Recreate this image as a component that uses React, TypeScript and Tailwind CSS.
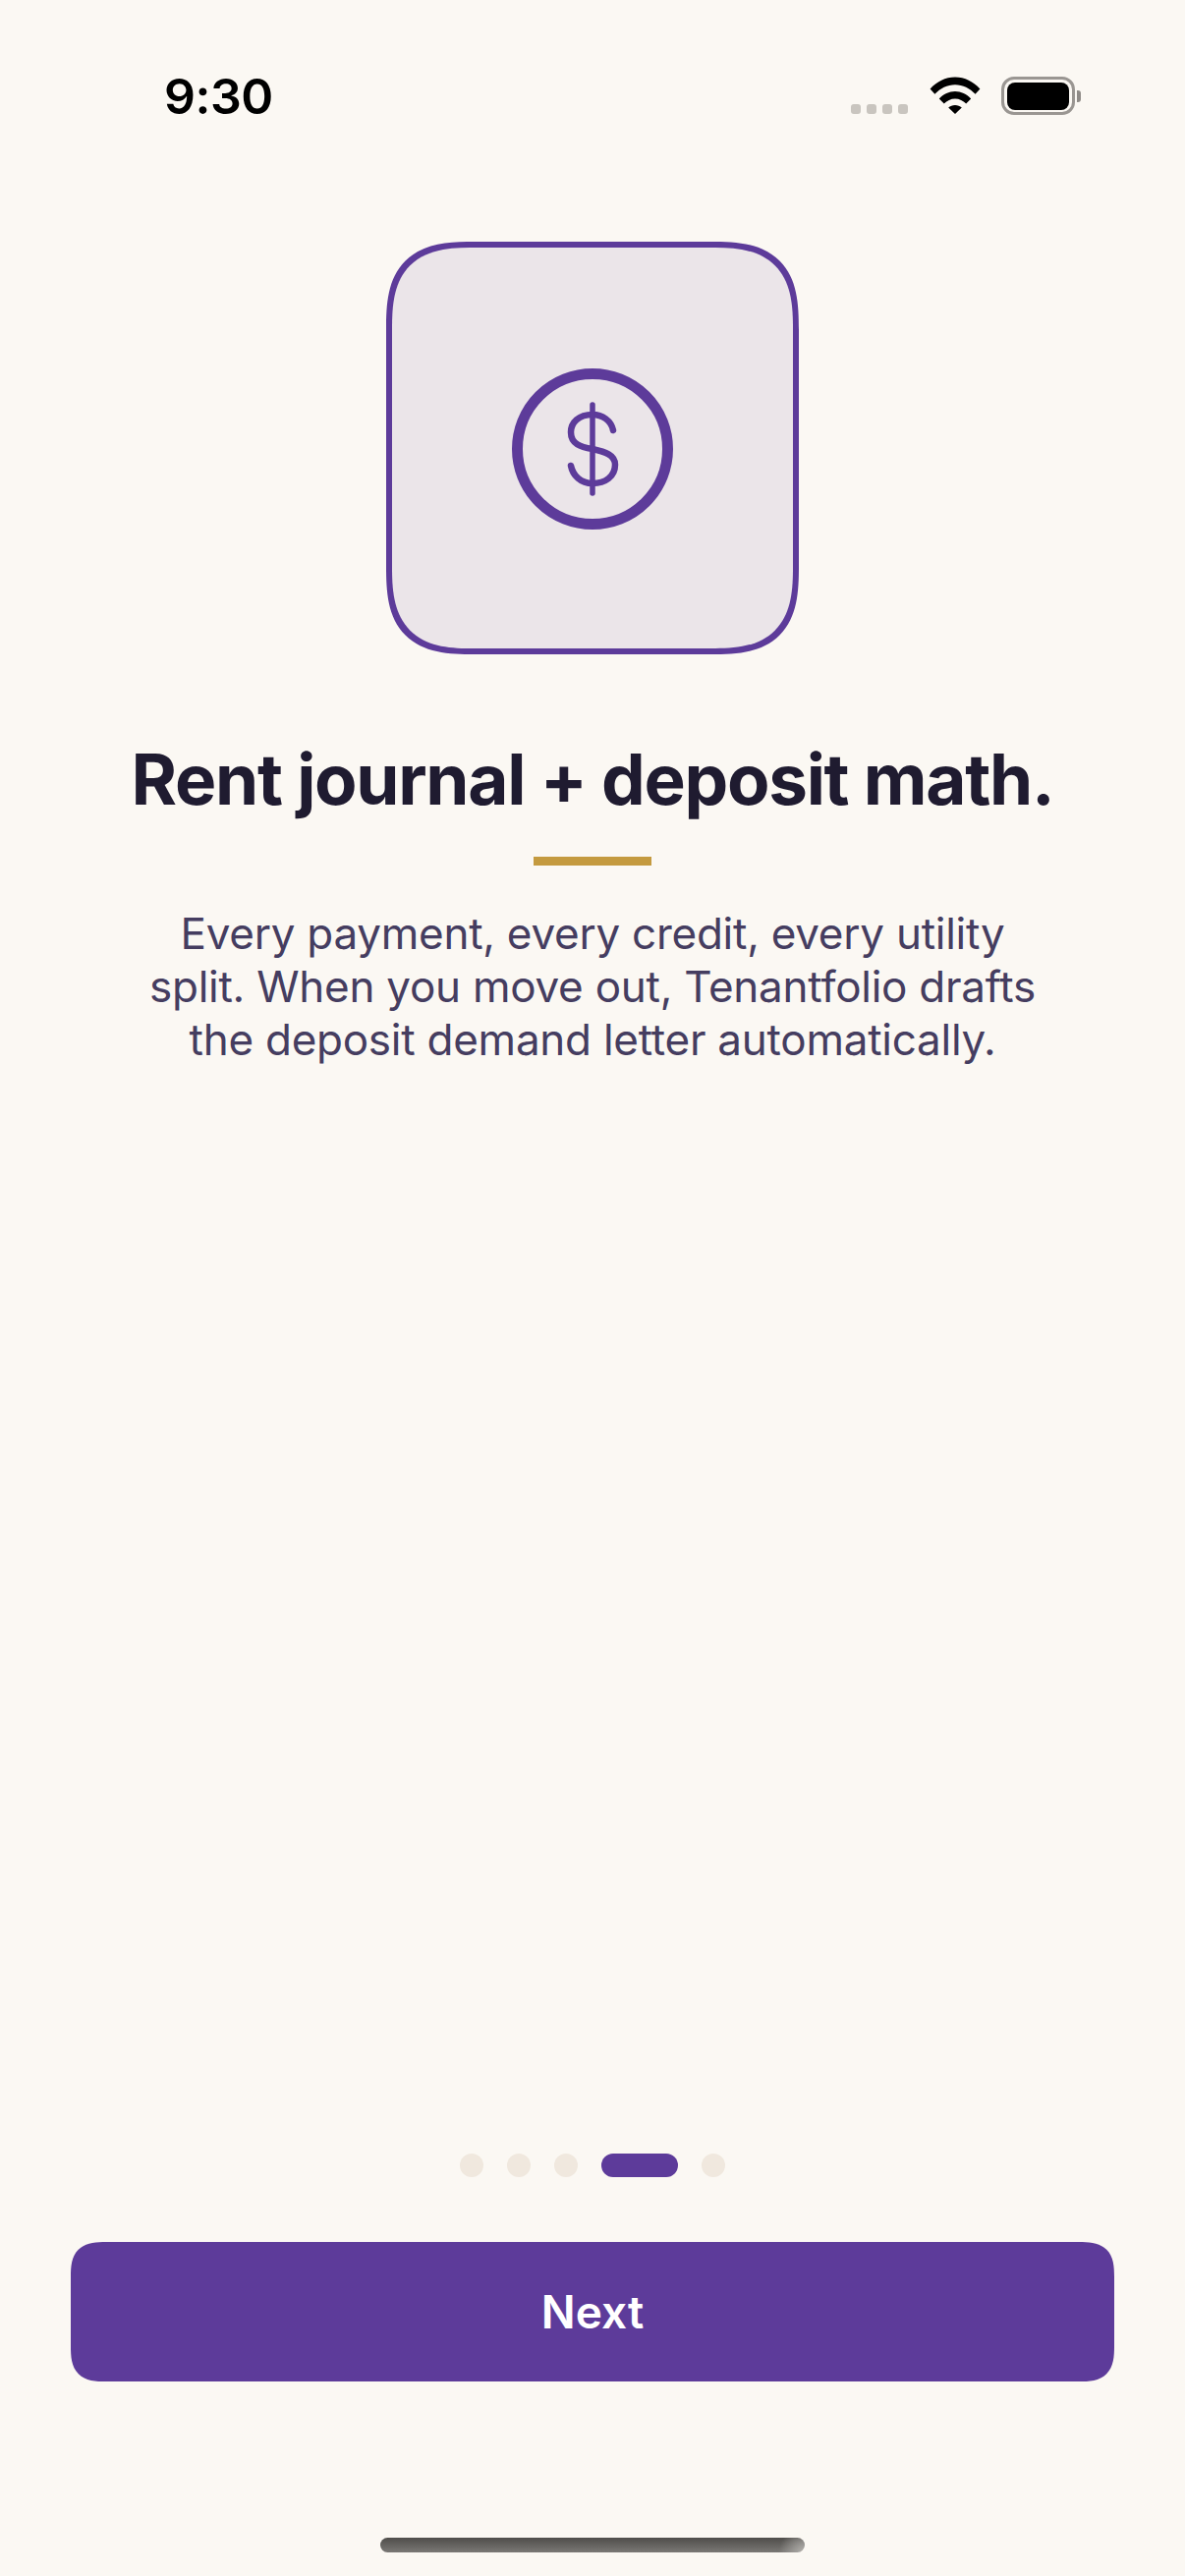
const DOTS = [false, false, false, true, false];

function WifiIcon() {
  return (
    <svg width="52" height="38" viewBox="0 0 52 38" fill="#000">
      <path d="M0.6 12.6 C7.4 5.2 16.2 0.6 26 0.6 C35.8 0.6 44.6 5.2 51.4 12.6 L46.6 17.8 C41 11.8 34 8.2 26 8.2 C18 8.2 11 11.8 5.4 17.8 Z" />
      <path d="M9.8 22.4 C14.2 17.8 19.8 15 26 15 C32.2 15 37.8 17.8 42.2 22.4 L37.2 27.6 C34.2 24.6 30.4 22.6 26 22.6 C21.6 22.6 17.8 24.6 14.8 27.6 Z" />
      <path d="M19.2 31.6 C21 30 23.4 29 26 29 C28.6 29 31 30 32.8 31.6 L26 38 Z" />
    </svg>
  );
}

function StatusBar() {
  return (
    <div className="flex h-[78px] mt-[78px] w-full items-start justify-between pl-[167px] pr-[106px]">
      <span className="text-[50px] leading-[40px] font-semibold tracking-[-0.5px] text-black">9:30</span>
      <div className="flex items-start">
        <div className="mt-[28px] mr-[22px] flex gap-[6px]">
          <span className="h-[10px] w-[10px] rounded-[3px] bg-[#c9c5bf]" />
          <span className="h-[10px] w-[10px] rounded-[3px] bg-[#c9c5bf]" />
          <span className="h-[10px] w-[10px] rounded-[3px] bg-[#c9c5bf]" />
          <span className="h-[10px] w-[10px] rounded-[3px] bg-[#c9c5bf]" />
        </div>
        <WifiIcon />
        <div className="ml-[21px] flex items-center">
          <div className="flex h-[39px] w-[75px] items-center justify-center rounded-[13px] border-[3px] border-[#9a9692]">
            <div className="h-[28px] w-[63px] rounded-[8px] bg-black" />
          </div>
          <div className="ml-[2px] h-[12px] w-[4px] rounded-r-[3px] bg-[#8f8b87]" />
        </div>
      </div>
    </div>
  );
}

function DollarIcon() {
  return (
    <svg width="166" height="166" viewBox="0 0 166 166" fill="none" stroke="#5d3b9a" strokeLinecap="round">
      <circle cx="83" cy="84" r="76.5" strokeWidth="11" />
      <path
        d="M104 65 C102 55 93 49 83 49 C69 49 61 57 61 67 C61 79 71 82 83 84 C96 87 106 90 106 100 C106 112 96 119 83 119 C71 119 63 111 61 101"
        strokeWidth="6.5"
      />
      <path d="M83 39 V129" strokeWidth="5.5" />
    </svg>
  );
}

export default function App() {
  return (
    <div className="flex h-[2622px] w-[1206px] flex-col items-center bg-[#fbf8f3] font-['Inter',sans-serif]">
      <StatusBar />

      <div className="mt-[90px] flex h-[420px] w-[420px] items-center justify-center rounded-[90px] border-[6px] border-[#5d3b9a] bg-[#ebe5e9] [corner-shape:superellipse(1.5)]">
        <DollarIcon />
      </div>

      <h1 className="mt-[85px] text-[71px] leading-[84px] font-bold tracking-[-1.3px] text-[#1f1b30]">
        Rent journal + deposit math.
      </h1>

      <div className="mt-[37px] h-[9px] w-[120px] bg-[#c49a3f]" />

      <p className="mt-[42px] w-[960px] text-center text-[44px] leading-[54px] tracking-[-0.25px] text-[#453d60]">
        Every payment, every credit, every utility
        <br />
        split. When you move out, Tenantfolio drafts
        <br />
        the deposit demand letter automatically.
      </p>

      <div className="mt-auto flex items-center gap-[24px]">
        {DOTS.map((active, index) =>
          active ? (
            <span key={index} className="h-[24px] w-[78px] rounded-full bg-[#5d3b9a]" />
          ) : (
            <span key={index} className="h-[24px] w-[24px] rounded-full bg-[#f0e8de]" />
          )
        )}
      </div>

      <button
        type="button"
        className="mt-[66px] flex h-[142px] w-[1062px] items-center justify-center rounded-[36px] bg-[#5d3b9a] text-[46px] font-semibold text-white [corner-shape:superellipse(1.5)]"
      >
        Next
      </button>

      <div className="mt-[159px] mb-[24px] h-[15px] w-[432px] rounded-full bg-[radial-gradient(circle_at_100%_100%,#b4b2ae_0,transparent_26px),linear-gradient(180deg,#4f4d4a,#7a7875)]" />
    </div>
  );
}
